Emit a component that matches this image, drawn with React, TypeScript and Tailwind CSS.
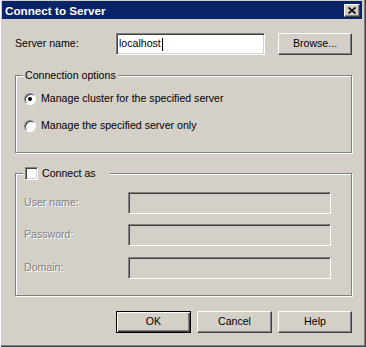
import React from 'react';

const font = { fontFamily: '"Liberation Sans", Arial, sans-serif' };

function Sunken({ className = '', children }: { className?: string; children?: React.ReactNode }) {
  return (
    <div
      className={`h-[22px] border border-t-[#808080] border-l-[#808080] border-b-white border-r-white shadow-[inset_1px_1px_0_#404040,inset_-1px_-1px_0_#d4d0c8] ${className}`}
    >
      {children}
    </div>
  );
}

function Button({ label, isDefault = false, w = 'w-[75px]' }: { label: string; isDefault?: boolean; w?: string }) {
  const edge = isDefault
    ? 'border border-black shadow-[inset_1px_1px_0_#fff,inset_-1px_-1px_0_#404040,inset_-2px_-2px_0_#808080]'
    : 'border border-t-white border-l-white border-b-[#404040] border-r-[#404040] shadow-[inset_-1px_-1px_0_#808080]';
  return (
    <button className={`${w} h-[22px] bg-[#d4d0c8] text-[10.6px] text-black flex items-center justify-center ${edge}`}>
      {label}
    </button>
  );
}

function Radio({ checked }: { checked?: boolean }) {
  return (
    <span className="w-[12px] h-[12px] rounded-full bg-white border border-t-[#808080] border-l-[#808080] border-b-white border-r-white shadow-[inset_1px_1px_0_#404040] flex items-center justify-center">
      {checked && <span className="w-[4px] h-[4px] rounded-full bg-black" />}
    </span>
  );
}

function DisabledField({ label, className = '' }: { label: string; className?: string }) {
  return (
    <div className={`flex items-center h-[22px] ${className}`}>
      <span className="w-[104px] text-[#808080] [text-shadow:1px_1px_0_#fff]">{label}</span>
      <Sunken className="w-[203px] bg-[#d4d0c8]" />
    </div>
  );
}

export default function App() {
  return (
    <div
      style={font}
      className="w-[366px] h-[347px] bg-[#d4d0c8] flex flex-col pt-[1px] pl-[2px] pr-[4px] text-[10.6px] text-black shadow-[inset_1px_0_0_#fff,inset_-1px_-1px_0_#404040,inset_-2px_-2px_0_#808080] overflow-hidden"
    >
      {/* Title bar */}
      <div className="h-[18px] bg-[#0a246a] flex items-center pl-[3px] pr-[2px]">
        <span className="text-white font-bold text-[11.7px] pt-[2px]">Connect to Server</span>
        <button className="ml-auto w-[16px] h-[13px] bg-[#d4d0c8] border border-t-white border-l-white border-b-[#404040] border-r-[#404040] shadow-[inset_-1px_-1px_0_#808080] flex items-center justify-center">
          <svg width="8" height="7" viewBox="0 0 8 7">
            <path d="M0.5 0.5 L7.5 6.5 M7.5 0.5 L0.5 6.5" stroke="#000" strokeWidth="1.6" />
          </svg>
        </button>
      </div>

      <div className="pl-[13px] pr-[10px] flex flex-col">
        {/* Server name row */}
        <div className="mt-[14px] h-[22px] flex items-center">
          <span className="w-[101px]">Server name:</span>
          <Sunken className="w-[149px] bg-white flex items-center pl-[2px]">
            <span>localhost</span>
            <span className="w-[1px] h-[13px] bg-black ml-[1px]" />
          </Sunken>
          <div className="ml-auto">
            <Button label="Browse..." w="w-[74px]" />
          </div>
        </div>

        {/* Connection options */}
        <div className="relative mt-[20px] h-[78px] border border-[#808080] shadow-[inset_1px_1px_0_#fff,1px_1px_0_#fff] pl-[8px] pt-[15px]">
          <span className="absolute -top-[7px] left-[7px] px-[2px] bg-[#d4d0c8] leading-[13px]">Connection options</span>
          <div className="h-[16px] flex items-center gap-[5px]">
            <Radio checked />
            <span>Manage cluster for the specified server</span>
          </div>
          <div className="h-[16px] mt-[11px] flex items-center gap-[5px]">
            <Radio />
            <span>Manage the specified server only</span>
          </div>
        </div>

        {/* Connect as */}
        <div className="relative mt-[20px] h-[123px] border border-[#808080] shadow-[inset_1px_1px_0_#fff,1px_1px_0_#fff] pl-[8px] pt-[18px]">
          <div className="absolute -top-[7px] left-[7px] pl-[2px] pr-[14px] bg-[#d4d0c8] flex items-center gap-[4px] h-[13px]">
            <span className="w-[13px] h-[13px] bg-white border border-t-[#808080] border-l-[#808080] border-b-white border-r-white shadow-[inset_1px_1px_0_#404040,inset_-1px_-1px_0_#d4d0c8]" />
            <span>Connect as</span>
          </div>
          <DisabledField label="User name:" />
          <DisabledField label="Password:" className="mt-[10px]" />
          <DisabledField label="Domain:" className="mt-[11px]" />
        </div>

        {/* Buttons */}
        <div className="mt-[15px] flex justify-end gap-[6px]">
          <Button label="OK" isDefault />
          <Button label="Cancel" />
          <Button label="Help" w="w-[74px]" />
        </div>
      </div>
    </div>
  );
}
